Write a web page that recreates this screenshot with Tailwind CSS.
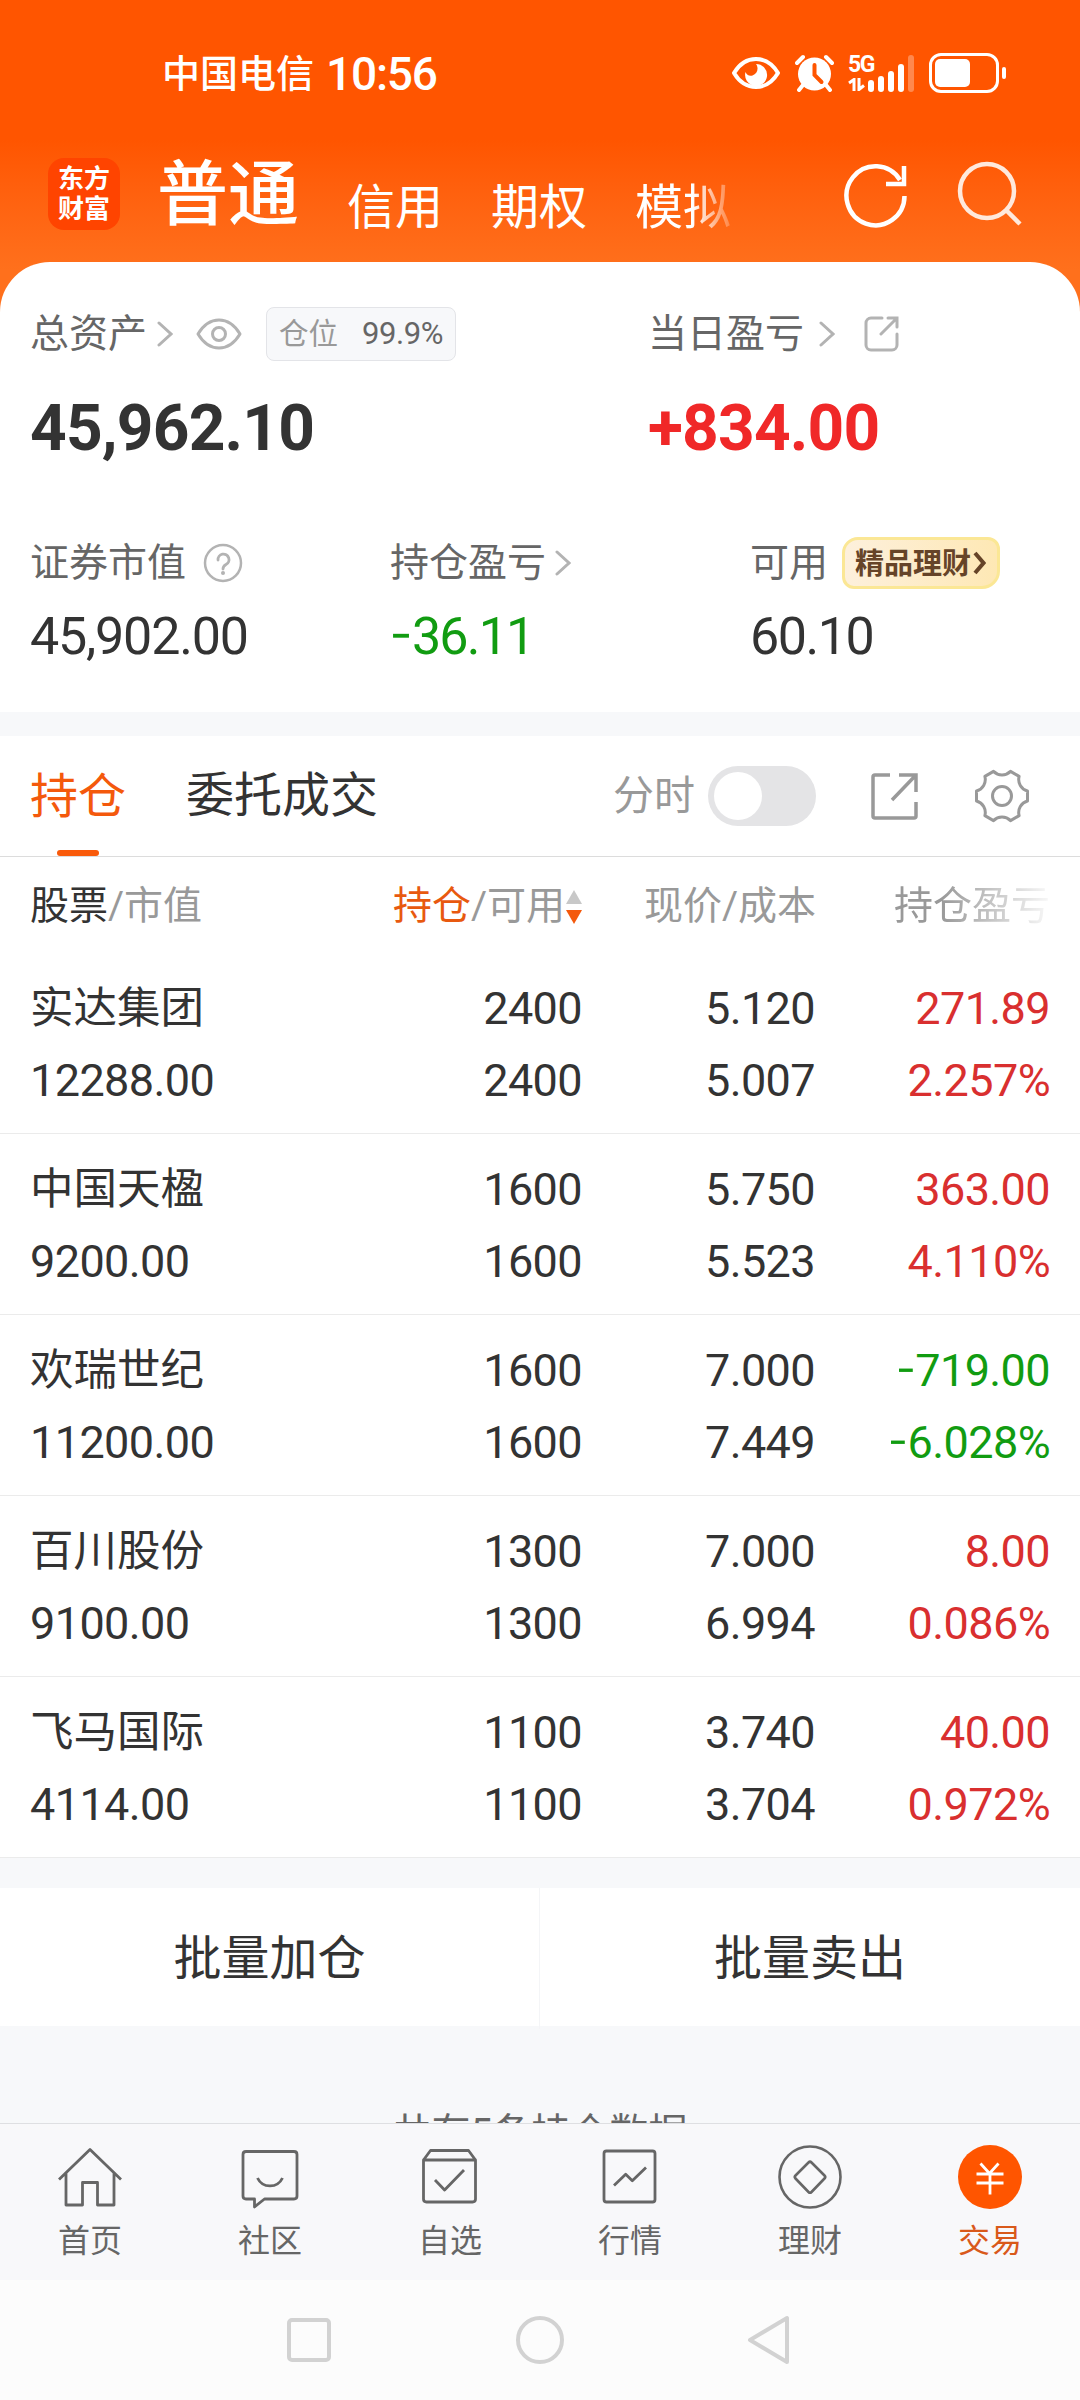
<!DOCTYPE html>
<html lang="zh-CN">
<head>
  <meta charset="UTF-8" />
  <meta name="viewport" content="width=device-width, initial-scale=1.0" />
  <title>交易 - 持仓</title>
  <script src="https://cdn.jsdelivr.net/npm/@tailwindcss/browser@4"></script>
</head>
<body class="bg-white font-['Roboto','Noto_Sans_CJK_SC',sans-serif] text-[#333]">
  <div class="w-[1080px] h-[2400px] flex flex-col overflow-hidden bg-[#f7f8fa]">

    <div class="bg-linear-to-b from-[#ff5500] from-[140px] to-[#ff701c] to-[270px]">
      <!-- Status bar -->
      <div class="h-[146px] pl-[162px] pr-[74px] flex items-center text-white">
        <span class="pt-[2px] text-[38px] leading-[48px] font-medium">中国电信</span>
        <span class="ml-[12px] pt-[1px] text-[46px] leading-[48px] font-medium tracking-[-1.200px]">10:56</span>
        <svg class="ml-auto w-[48px] h-[36px]" viewBox="0 0 48 36" fill="none">
          <path d="M2 18C8 8 16 4 24 4s16 4 22 14c-6 10-14 14-22 14S8 28 2 18z" stroke="#fff" stroke-width="4" stroke-linejoin="round" />
          <path d="M24 9a11 11 0 1 1-10.500 8c1 3 4 4.500 7 3.500 5-1.500 6.500-7.500 3.500-11.500z" fill="#fff" />
        </svg>
        <svg class="ml-[15px] w-[39px] h-[38px]" viewBox="0 0 39 38" fill="none">
          <circle cx="19.500" cy="20" r="16.500" fill="#fff" />
          <path d="M2 9l6-6M37 9l-6-6M8 31l-4 5M31 31l4 5" stroke="#fff" stroke-width="4" stroke-linecap="round" />
          <path d="M19.500 11v10l7 7" stroke="#ff5500" stroke-width="4" stroke-linecap="round" />
        </svg>
        <div class="ml-[14px] flex items-end h-[38px]">
          <div class="w-[20px] h-[38px] flex flex-col">
            <span class="text-[23px] leading-[22px] font-bold w-[30px] tracking-[-1.500px]">5G</span>
            <svg class="mt-[2px] w-[17px] h-[13px]" viewBox="0 0 17 13" fill="none" stroke="#fff" stroke-width="3">
              <path d="M1 5l5-3.500V13M11 0v11.500l5-4" />
            </svg>
          </div>
          <div class="w-[6px] h-[12px] rounded-full bg-white"></div>
          <div class="ml-[4px] w-[6px] h-[16px] rounded-full bg-white"></div>
          <div class="ml-[4px] w-[6px] h-[21px] rounded-full bg-white"></div>
          <div class="ml-[4px] w-[6px] h-[28px] rounded-full bg-white"></div>
          <div class="ml-[4px] w-[6px] h-[37px] rounded-full bg-white/30"></div>
        </div>
        <div class="ml-[15px] w-[70px] h-[40px] rounded-[12px] border-[3px] border-white p-[3px]">
          <div class="w-[35px] h-full rounded-[5px] bg-white"></div>
        </div>
        <div class="ml-[3px] w-[4px] h-[12px] rounded-full bg-white"></div>
      </div>

      <!-- App header -->
      <div class="h-[116px] pl-[48px] flex items-start text-white">
        <div class="mt-[12px] w-[72px] h-[72px] rounded-[16px] bg-[#ff4400] flex flex-col items-center justify-center text-[26px] leading-[30px] font-bold">
          <span>东方</span>
          <span>财富</span>
        </div>
        <div class="ml-[37px] h-[96px] w-[603px] flex items-end gap-[48px] text-[48px] leading-[68px]">
          <span class="text-[71px] leading-[95px] font-medium">普通</span>
          <span>信用</span>
          <span>期权</span>
          <span class="mask-r-from-60% mask-r-to-110%">模拟</span>
        </div>
        <svg class="ml-[84px] mt-[16px] w-[64px] h-[66px]" viewBox="0 0 64 66" fill="none" stroke="#fff" stroke-width="4.500">
          <path d="M60.500 34A29 29.500 0 1 1 56 18" />
          <path d="M60 4v18H42" />
        </svg>
        <svg class="ml-[49px] mt-[14px] w-[66px] h-[66px]" viewBox="0 0 66 66" fill="none" stroke="#ffe9dc" stroke-width="4.500">
          <circle cx="30" cy="31" r="27" />
          <path d="M49 50l14 14" />
        </svg>
      </div>

      <!-- Account summary -->
      <div class="h-[450px] rounded-t-[50px] bg-white pt-[45px] pl-[30px]">
        <div class="h-[54px] flex items-center">
          <div class="w-[618px] flex items-center">
            <span class="text-[39px] leading-[54px] text-[#666]">总资产</span>
            <svg class="ml-[10px] w-[16px] h-[28px]" viewBox="0 0 16 28" fill="none" stroke="#b3b3b3" stroke-width="3" stroke-linecap="round"><path d="M2 3l12 11L2 25" /></svg>
            <svg class="ml-[23px] w-[46px] h-[34px]" viewBox="0 0 46 34" fill="none" stroke="#b3b3b3" stroke-width="3" stroke-linejoin="round">
              <path d="M2 17C8 7 16 3 23 3s15 4 21 14c-6 10-14 14-21 14S8 27 2 17z" />
              <circle cx="23" cy="17" r="6.500" />
            </svg>
            <div class="ml-[24px] w-[190px] h-[54px] rounded-[8px] border border-[#e3e4e8] bg-[#f7f8fa] pl-[12px] flex items-center">
              <span class="text-[29.500px] leading-[40px] text-[#999]">仓位</span>
              <span class="ml-[24px] text-[31px] leading-[40px] tracking-[-0.400px] text-[#666]">99.9%</span>
            </div>
          </div>
          <span class="text-[39px] leading-[54px] text-[#666]">当日盈亏</span>
          <svg class="ml-[15px] w-[16px] h-[28px]" viewBox="0 0 16 28" fill="none" stroke="#b3b3b3" stroke-width="3" stroke-linecap="round"><path d="M2 3l12 11L2 25" /></svg>
          <svg class="ml-[29px] w-[36px] h-[36px]" viewBox="0 0 36 36" fill="none" stroke="#b3b3b3" stroke-width="3" stroke-linecap="round">
            <path d="M18 2H7a5 5 0 0 0-5 5v22a5 5 0 0 0 5 5h21a5 5 0 0 0 5-5V18" />
            <path d="M24 2h9v9M33 2L17 18" />
          </svg>
        </div>
        <div class="mt-[30px] h-[76px] flex text-[64px] leading-[76px] font-bold tracking-[-0.800px]">
          <span class="w-[618px]">45,962.10</span>
          <span class="text-[#f02828]">+834.00</span>
        </div>
        <div class="mt-[70px] h-[52px] grid grid-cols-[360px_360px_1fr] items-center text-[39px] leading-[52px] text-[#666]">
          <div class="flex items-center">
            <span>证券市值</span>
            <svg class="ml-[16px] w-[42px] h-[42px]" viewBox="0 0 42 42" fill="none">
              <circle cx="21" cy="21" r="18" stroke="#b3b3b3" stroke-width="2.500" />
              <path d="M16 18a5.500 5.500 0 1 1 8 4.500c-2 1-3 2-3 4.500" stroke="#b3b3b3" stroke-width="2.800" stroke-linecap="round" />
              <circle cx="21" cy="31" r="2" fill="#b3b3b3" />
            </svg>
          </div>
          <div class="flex items-center">
            <span>持仓盈亏</span>
            <svg class="ml-[9px] w-[16px] h-[28px]" viewBox="0 0 16 28" fill="none" stroke="#b3b3b3" stroke-width="3" stroke-linecap="round"><path d="M2 3l12 11L2 25" /></svg>
          </div>
          <div class="flex items-center">
            <span>可用</span>
            <div class="ml-[14px] w-[158px] h-[52px] rounded-tl-[16px] rounded-tr-[12px] rounded-br-[18px] rounded-bl-[12px] border-[3px] border-[#fbe795] bg-linear-to-r from-[#fdf0dc] to-[#fee8b4] pl-[10px] flex items-center">
              <span class="pt-[2px] text-[29px] leading-[40px] font-bold text-[#664428]">精品理财</span>
              <svg class="ml-[2px] w-[13px] h-[24px]" viewBox="0 0 13 24" fill="none" stroke="#664428" stroke-width="4"><path d="M2 2l8.500 10L2 22" /></svg>
            </div>
          </div>
        </div>
        <div class="mt-[18px] grid grid-cols-[360px_360px_1fr] text-[52px] leading-[60px] tracking-[-1.200px]">
          <span>45,902.00</span>
          <span class="text-[#119c11] tracking-[-1.800px]"><span class="inline-block origin-left scale-x-75 -mr-[6px]">−</span>36.11</span>
          <span class="tracking-[-1.500px]">60.10</span>
        </div>
      </div>
    </div>

    <!-- Tabs -->
    <div class="mt-[24px] h-[121px] shrink-0 bg-white border-b border-[#dcdcdc] pl-[30px] flex items-center text-[48px] leading-[122px]">
      <div class="h-[120px] flex flex-col items-center text-[#f4590c]">
        <span class="h-[114px]">持仓</span>
        <div class="w-[42px] h-[6px] rounded-full bg-[#f95a0a]"></div>
      </div>
      <span class="ml-[60px]">委托成交</span>
      <span class="ml-[235px] text-[41px] text-[#999]">分时</span>
      <div class="ml-[13px] w-[108px] h-[60px] rounded-full bg-[#e4e4e6] p-[6px]">
        <div class="w-[48px] h-[48px] rounded-full bg-white"></div>
      </div>
      <svg class="ml-[54px] w-[48px] h-[48px]" viewBox="0 0 48 48" fill="none" stroke="#999" stroke-width="3.500">
        <path d="M20 3H5q-2 0-2 2v39q0 2 2 2h39q2 0 2-2V30" />
        <path d="M29 3h17v17M46 3L22 28" />
      </svg>
      <svg class="ml-[56px] w-[56px] h-[56px]" viewBox="-28 -28 56 56" fill="none" stroke="#999" stroke-width="3" stroke-linejoin="round">
        <path d="M-8.500-24.600A12 12 0 0 0 8.500-24.600L17.100-19.600A12 12 0 0 0 25.500-5V5A12 12 0 0 0 17.100 19.600L8.500 24.600A12 12 0 0 0-8.500 24.600L-17.100 19.600A12 12 0 0 0-25.500 5V-5A12 12 0 0 0-17.100-19.600z" />
        <circle r="9.500" />
      </svg>
    </div>

    <!-- Holdings table -->
    <div class="bg-white">
      <div class="h-[96px] pt-px pl-[30px] grid grid-cols-[321px_231px_233px_235px] items-center text-[39px] leading-[60px] text-[#999]">
        <div><span class="text-[#333]">股票</span>/市值</div>
        <div class="flex items-center justify-end">
          <span><span class="text-[#e8590f]">持仓</span>/可用</span>
          <svg class="ml-[1px] w-[16px] h-[36px]" viewBox="0 0 16 36">
            <path d="M8 2l8 14H0z" fill="#c8c8c8" />
            <path d="M8 36l8-14H0z" fill="#f4590c" />
          </svg>
        </div>
        <div class="-mr-px text-right">现价/成本</div>
        <div class="text-right"><span class="inline-block mask-r-from-30% mask-r-to-105%">持仓盈亏</span></div>
      </div>
      <div id="holdings"></div>
    </div>

    <!-- Batch actions -->
    <div class="mt-[30px] h-[138px] shrink-0 grid grid-cols-2 bg-white text-center text-[48px] leading-[141px]">
      <span class="border-r border-[#f4f5f7]">批量加仓</span>
      <span>批量卖出</span>
    </div>
    <div class="h-[97px] shrink-0 pt-[79px] overflow-hidden text-center text-[39px] leading-[56px] text-[#666]">共有5条持仓数据</div>

    <!-- Bottom navigation -->
    <div class="h-[157px] shrink-0 border-t border-[#dedfe2] bg-[#f8f8fa] grid grid-cols-6 text-[32px] leading-[44px] text-[#666]">
      <div class="pt-[21px] flex flex-col items-center">
        <svg class="w-[64px] h-[64px]" viewBox="0 0 64 64" fill="none" stroke="#666" stroke-width="2.800" stroke-linejoin="round">
          <path d="M1 34.500L32 4.500l31 30M8 28.500V60h16.500V37.500h15V60H56V28.500" />
        </svg>
        <span class="mt-[10px]">首页</span>
      </div>
      <div class="pt-[21px] flex flex-col items-center">
        <svg class="w-[64px] h-[64px]" viewBox="0 0 64 64" fill="none" stroke="#666" stroke-width="2.800" stroke-linejoin="round">
          <path d="M8 6.500h48q3 0 3 3V51q0 3-3 3H26.500l-10 8V54H8q-3 0-3-3V9.500q0-3 3-3z" />
          <path d="M19.500 33c5 10.500 20 10.500 25 0" />
        </svg>
        <span class="mt-[10px]">社区</span>
      </div>
      <div class="pt-[21px] flex flex-col items-center">
        <svg class="w-[64px] h-[64px]" viewBox="0 0 64 64" fill="none" stroke="#666" stroke-width="2.800" stroke-linejoin="round">
          <path d="M5.500 15h52v39q0 3-3 3h-46q-3 0-3-3zl7-9.500h38l7 9.500" />
          <path d="M17 35l9.600 10L46 25" />
        </svg>
        <span class="mt-[10px]">自选</span>
      </div>
      <div class="pt-[21px] flex flex-col items-center">
        <svg class="w-[64px] h-[64px]" viewBox="0 0 64 64" fill="none" stroke="#666" stroke-width="2.800" stroke-linejoin="round">
          <rect x="6" y="6" width="51" height="51" rx="2.500" />
          <path d="M16 40.500l11.700-11.200 6.600 6.400L48 22.500" />
        </svg>
        <span class="mt-[10px]">行情</span>
      </div>
      <div class="pt-[21px] flex flex-col items-center">
        <svg class="w-[64px] h-[64px]" viewBox="0 0 64 64" fill="none" stroke="#666" stroke-width="2.600" stroke-linejoin="round">
          <circle cx="32" cy="32" r="30.500" />
          <path d="M30.500 17.500q1.500-1.500 3 0L46.500 30.500q1.500 1.500 0 3L33.500 47q-1.500 1.500-3 0L17.500 33.500q-1.500-1.500 0-3z" />
        </svg>
        <span class="mt-[10px]">理财</span>
      </div>
      <div class="pt-[21px] flex flex-col items-center">
        <svg class="w-[64px] h-[64px]" viewBox="0 0 64 64" fill="none" stroke="#fff" stroke-width="2.800">
          <circle cx="32" cy="32" r="32" fill="#ff5500" stroke="none" />
          <path d="M22.500 18.500l9 10 9-10M18.500 29h27M18.500 38h27M32 28v21.500" />
        </svg>
        <span class="mt-[10px] text-[#d9591a]">交易</span>
      </div>
    </div>

    <!-- System navigation -->
    <div class="h-[120px] shrink-0 bg-[#fcfcfc] pl-[287px] flex items-center">
      <div class="w-[44px] h-[44px] rounded-[5px] border-4 border-[#d2d2d2]"></div>
      <div class="ml-[185px] w-[48px] h-[48px] rounded-full border-4 border-[#d2d2d2]"></div>
      <svg class="ml-[183px] w-[44px] h-[50px]" viewBox="0 0 44 50" fill="none" stroke="#d2d2d2" stroke-width="4" stroke-linejoin="round">
        <path d="M40 3v44L3 25z" />
      </svg>
    </div>
  </div>

  <script>
    const holdings = [
      { name: '实达集团', value: '12288.00', amount: '2400', usable: '2400', price: '5.120', cost: '5.007', profit: '271.89', rate: '2.257%' },
      { name: '中国天楹', value: '9200.00', amount: '1600', usable: '1600', price: '5.750', cost: '5.523', profit: '363.00', rate: '4.110%' },
      { name: '欢瑞世纪', value: '11200.00', amount: '1600', usable: '1600', price: '7.000', cost: '7.449', profit: '-719.00', rate: '-6.028%' },
      { name: '百川股份', value: '9100.00', amount: '1300', usable: '1300', price: '7.000', cost: '6.994', profit: '8.00', rate: '0.086%' },
      { name: '飞马国际', value: '4114.00', amount: '1100', usable: '1100', price: '3.740', cost: '3.704', profit: '40.00', rate: '0.972%' },
    ];

    // The font's hyphen is too short for a sign, so use a slightly narrowed minus
    function withSign(text) {
      return text.replace('-', '<span class="inline-block origin-right scale-x-75">−</span>');
    }

    document.getElementById('holdings').innerHTML = holdings.map(item => {
      const color = item.profit.startsWith('-') ? 'text-[#119c11]' : 'text-[#d92f2f]';
      return `
        <div class="h-[181px] border-b border-[#ebebeb] pt-[20px] pl-[30px] grid grid-cols-[321px_231px_233px_235px] grid-rows-[72px_72px] text-right text-[45px] leading-[72px] tracking-[-0.600px]">
          <span class="text-left text-[43.500px] tracking-normal">${item.name}</span>
          <span>${item.amount}</span>
          <span>${item.price}</span>
          <span class="${color}">${withSign(item.profit)}</span>
          <span class="text-left">${item.value}</span>
          <span>${item.usable}</span>
          <span>${item.cost}</span>
          <span class="${color}">${withSign(item.rate)}</span>
        </div>`;
    }).join('');
  </script>
</body>
</html>
